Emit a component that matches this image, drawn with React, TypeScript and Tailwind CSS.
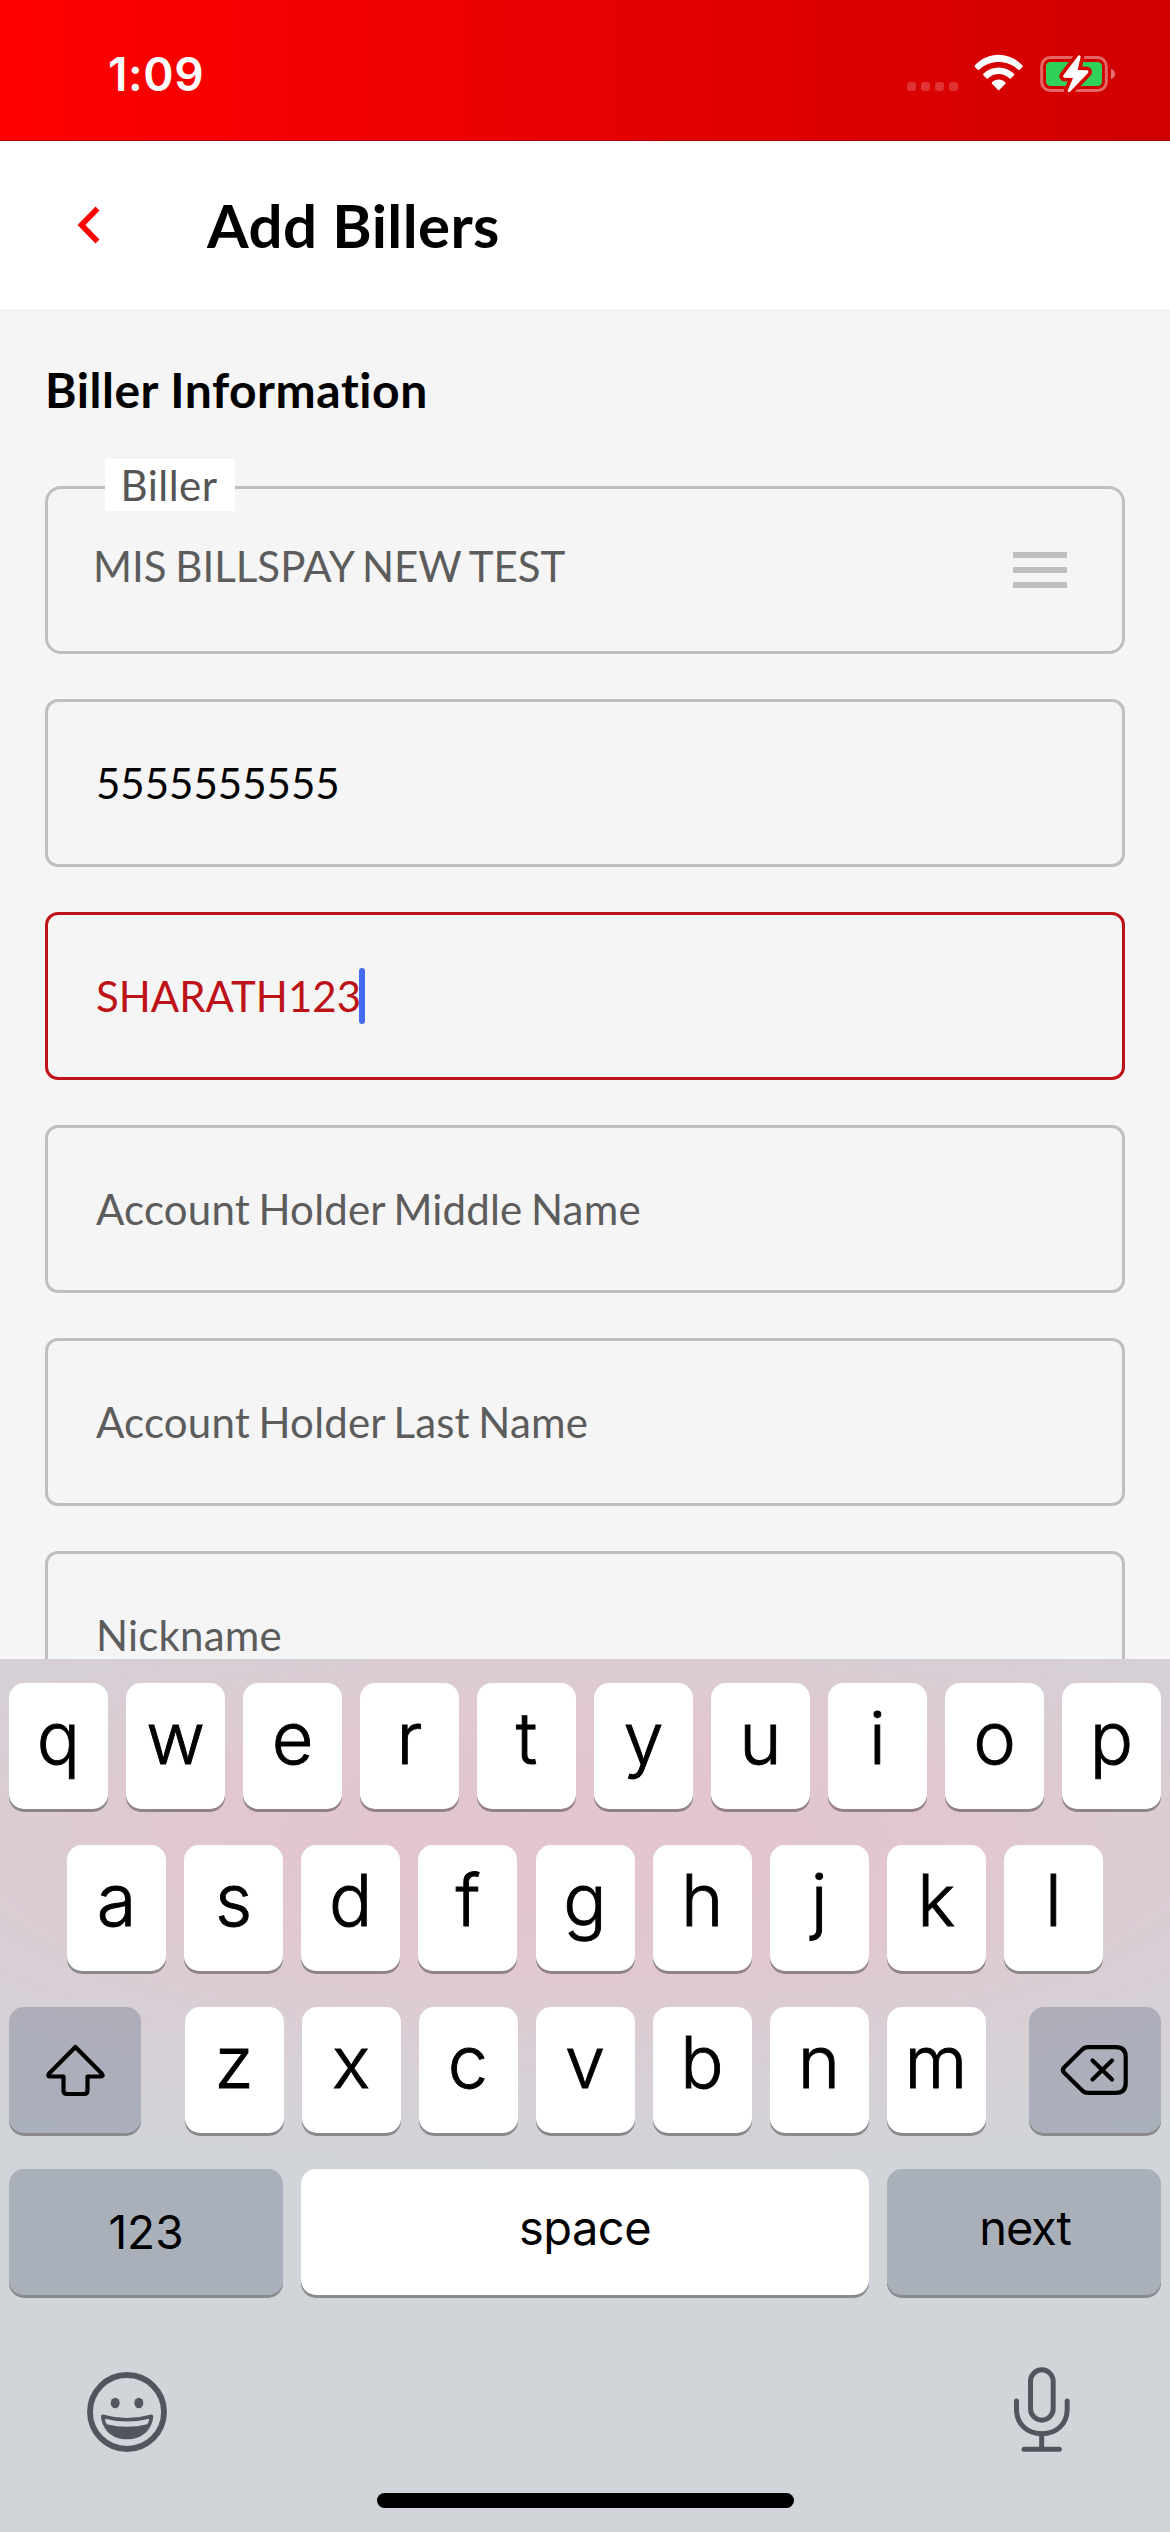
import React from "react";

function StatusBar() {
  return (
    <header className="flex h-[141px] shrink-0 items-start justify-between bg-linear-to-r from-[#ff0000] to-[#cf0000] pt-[44px] pr-[54px] pl-[108px] shadow-[inset_0_-1px_0_rgba(90,20,20,0.35)]">
      <span className="font-['Inter'] text-[46px] leading-[60px] font-semibold tracking-[0.6px] text-white">1:09</span>
      <div className="flex h-[60px] items-start pt-[10px]">
        <div className="mt-[28px] flex gap-[5px]">
          {[0, 1, 2, 3].map((i) => (
            <span key={i} className="size-[9px] rounded-[3px] bg-white/20" />
          ))}
        </div>
        <svg className="ml-[16px] h-[37px] w-[50px]" viewBox="343 163 150 111" fill="#fff">
          <path d="M346 197 C384 155 450 155 488 197 Q490 200 488 202 L480 210 Q477 212 474 209 C440 180 394 180 360 209 Q357 212 354 210 L346 202 Q344 200 346 197Z" />
          <path d="M371 222 C397 197 437 197 463 222 Q465 225 463 227 L454 236 Q452 238 449 236 C430 219 404 219 385 236 Q382 238 380 236 L371 227 Q369 225 371 222Z" />
          <path d="M397 248 C408 237 426 237 437 248 Q439 250 437 252 L419 271 Q417 273 415 271 L397 252 Q395 250 397 248Z" />
        </svg>
        <svg className="ml-[15px] h-[40px] w-[77px]" viewBox="537 162 231 120">
          <rect x="545" y="172.500" width="194" height="99" rx="26" fill="none" stroke="#fff" strokeOpacity="0.4" strokeWidth="9" />
          <rect x="558" y="186" width="168" height="72" rx="13" fill="#30d158" />
          <path d="M753 207 Q765 211 765 222 Q765 233 753 237Z" fill="#fff" fillOpacity="0.45" />
          <path
            d="M654 168 L610 226 Q607 232 613 233 L639 234 L623 272 Q623 279 630 275 L684 219 Q687 212 681 211 L653 210 L662 171 Q661 163 654 168Z"
            fill="#fff"
            stroke="#d60000"
            strokeWidth="22"
            strokeLinejoin="round"
            paintOrder="stroke"
          />
        </svg>
      </div>
    </header>
  );
}

function TitleBar() {
  return (
    <div className="flex h-[168px] shrink-0 items-center bg-white pl-[76px]">
      <svg className="h-[40px] w-[26px]" viewBox="0 0 26 40" fill="none" stroke="#ff0000" strokeWidth="5.600">
        <path d="M21.500 3.500 L5.400 20 L21.500 36.500" />
      </svg>
      <h1 className="ml-[105px] text-[60px] leading-[72px] font-bold tracking-[0.4px] text-black">Add Billers</h1>
    </div>
  );
}

function Field({ text, color, active = false }: { text: string; color: string; active?: boolean }) {
  return (
    <div
      className={`flex h-[168px] shrink-0 items-center rounded-[13px] border-3 pl-[48px] ${
        active ? "border-[#bd1218]" : "border-[#bfbfbf]"
      }`}
    >
      <span className={`text-[42px] leading-[50px] whitespace-nowrap ${color}`}>{text}</span>
      {active && <span className="-ml-[2px] h-[56px] w-[6px] rounded-full bg-[#426bf2]" />}
    </div>
  );
}

function BillerField() {
  return (
    <div className="relative flex h-[168px] shrink-0 items-center justify-between rounded-[16px] border-3 border-[#bfbfbf] pr-[55px] pl-[45px]">
      <span className="absolute -top-[30px] left-[57px] h-[52px] w-[130px] bg-white pr-[2px] text-center text-[42px] leading-[52px] tracking-[0.5px] text-[#555]">
        Biller
      </span>
      <span className="mb-[8px] text-[42px] leading-[50px] [word-spacing:-2px] whitespace-nowrap text-[#5c5c5c]">
        MIS BILLSPAY NEW TEST
      </span>
      <div className="flex w-[54px] flex-col gap-[9px]">
        <span className="h-[6px] bg-[#bfbfbf]" />
        <span className="h-[6px] bg-[#bfbfbf]" />
        <span className="h-[6px] bg-[#bfbfbf]" />
      </div>
    </div>
  );
}

const keyShape = "h-[126px] shrink-0 rounded-[15px] text-center text-black shadow-[0_3px_0_rgba(0,0,0,0.35)]";

function LetterKey({ letter }: { letter: string }) {
  return (
    <div className={`${keyShape} w-[99px] bg-white text-[72px] leading-[110px] font-light [-webkit-text-stroke:0.9px_#000]`}>
      {letter}
    </div>
  );
}

function Keyboard() {
  return (
    <section className="flex h-[873px] shrink-0 flex-col bg-[radial-gradient(ellipse_1050px_330px_at_50%_185px,#e3c5cd_0%,#e2c7cf_34%,#d9ced5_62%,#d1d4d9_100%)] bg-[#d1d4d9] px-[9px] pt-[24px] font-['Inter']">
      <div className="flex flex-col gap-[36px]">
        <div className="flex justify-between">
          {"qwertyuiop".split("").map((k) => (
            <LetterKey key={k} letter={k} />
          ))}
        </div>
        <div className="flex justify-between px-[58px]">
          {"asdfghjkl".split("").map((k) => (
            <LetterKey key={k} letter={k} />
          ))}
        </div>
        <div className="flex justify-between">
          <div className={`${keyShape} w-[132px] bg-[rgba(131,140,155,0.5)]`}>
            <svg className="h-[126px] w-[132px]" viewBox="0 0 132 126" fill="none" stroke="#000" strokeWidth="4.200" strokeLinejoin="round">
              <path d="M66.400 40 L40.100 66.500 Q38 69.500 41.500 69.500 H54.500 V83.500 Q54.500 87 58 87 H75 Q78.500 87 78.500 83.500 V69.500 H91.500 Q95 69.500 92.700 66.500Z" />
            </svg>
          </div>
          <div className="flex gap-[18px]">
            {"zxcvbnm".split("").map((k) => (
              <LetterKey key={k} letter={k} />
            ))}
          </div>
          <div className={`${keyShape} w-[132px] bg-[rgba(131,140,155,0.5)]`}>
            <svg className="h-[126px] w-[132px]" viewBox="0 0 132 126" fill="none" stroke="#000" strokeWidth="4.200" strokeLinecap="round" strokeLinejoin="round">
              <path d="M59 40.200 H87 Q96.700 40.200 96.700 50 V76 Q96.700 85.800 87 85.800 H59 Q55.500 85.800 53 83.200 L35 65.500 Q32.700 63 35 60.500 L53 42.800 Q55.500 40.200 59 40.200Z" />
              <path d="M63.500 53.500 L83 72.500 M83 53.500 L63.500 72.500" />
            </svg>
          </div>
        </div>
        <div className="flex justify-between">
          <div className={`${keyShape} w-[274px] bg-[rgba(131,140,155,0.5)] text-[46px] leading-[127px]`}>123</div>
          <div className={`${keyShape} w-[568px] bg-white text-[47px] leading-[118px] tracking-[-0.5px]`}>space</div>
          <div className={`${keyShape} w-[274px] bg-[rgba(131,140,155,0.5)] pl-[2px] text-[47px] leading-[118px] tracking-[-1.2px]`}>
            next
          </div>
        </div>
      </div>
      <div className="mt-[72px] flex justify-between pr-[91px] pl-[78px]">
        <svg className="mt-[5px] size-[80px]" viewBox="261 216 240 240" fill="#51565e">
          <circle cx="381" cy="336" r="111" fill="none" stroke="#51565e" strokeWidth="17.500" />
          <ellipse cx="345.500" cy="309" rx="13.500" ry="16" />
          <ellipse cx="416.500" cy="309" rx="13.500" ry="16" />
          <path
            fillRule="evenodd"
            d="M303 350 Q303 342 312 344 Q381 364 450 344 Q460 342 460 350 C455 391 425 418 381 418 C337 418 308 391 303 350Z M315 356 Q381 373 448 356 Q446 367 442 373 Q381 388 320 373 Q316 366 315 356Z"
          />
        </svg>
        <svg className="h-[85px] w-[56px]" viewBox="1032 199 168 255" fill="none" stroke="#51565e" strokeWidth="15" strokeLinecap="round">
          <rect x="1081.500" y="207.500" width="68" height="151" rx="34" />
          <path d="M1039.500 301 V326 C1039.500 370 1071 399 1115.500 399 C1160 399 1191.500 370 1191.500 326 V301" />
          <path d="M1115 400 V444" />
          <path d="M1062 445.500 H1168" />
        </svg>
      </div>
      <div className="mt-[41px] ml-[368px] h-[15px] w-[417px] rounded-full bg-black" />
    </section>
  );
}

export default function App() {
  return (
    <div className="flex h-[2532px] w-[1170px] flex-col overflow-hidden bg-[#f5f5f5] font-['Lato',sans-serif] [font-variant-ligatures:none]">
      <StatusBar />
      <TitleBar />
      <main className="h-[1350px] shrink-0 overflow-hidden px-[45px] pt-[51px]">
        <h2 className="text-[48px] leading-[60px] font-bold tracking-[0.55px] text-black">Biller Information</h2>
        <div className="mt-[66px] flex flex-col gap-[45px]">
          <BillerField />
          <Field text="5555555555" color="text-black" />
          <Field text="SHARATH123" color="text-[#bd1218]" active />
          <Field text="Account Holder Middle Name" color="text-[#5c5c5c] tracking-[0.2px] [word-spacing:-2.5px]" />
          <Field text="Account Holder Last Name" color="text-[#5c5c5c] tracking-[0.2px] [word-spacing:-2.5px]" />
          <Field text="Nickname" color="text-[#5c5c5c] tracking-[0.2px]" />
        </div>
      </main>
      <Keyboard />
    </div>
  );
}
